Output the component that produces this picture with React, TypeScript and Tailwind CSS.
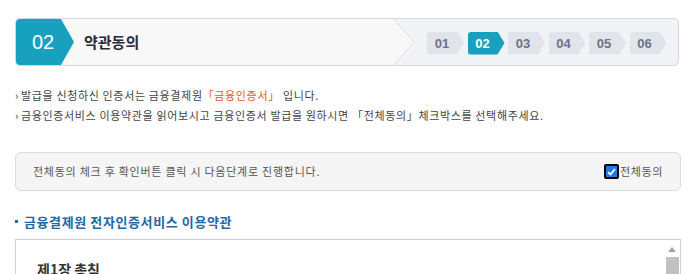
const KR = "font-['Noto_Sans_CJK_KR','Noto_Sans',sans-serif]";

const steps = ["01", "02", "03", "04", "05", "06"];

function StepBadge({ label, active }: { label: string; active: boolean }) {
  return (
    <div
      className={`flex h-[23px] w-[37px] items-center rounded-l-[3px] [clip-path:polygon(0_0,30px_0,37px_50%,30px_100%,0_100%)] ${
        active ? "bg-[#17a1be] text-white" : "bg-[#e2e4ec] text-[#6c7187]"
      }`}
    >
      <span className="w-[30px] text-center font-['Liberation_Sans',Arial,sans-serif] text-[13px] font-bold leading-none">
        {label}
      </span>
    </div>
  );
}

export default function App() {
  return (
    <div className={`h-[274px] w-[693px] overflow-hidden bg-white ${KR}`}>
      {/* 단계 헤더 */}
      <div className="ml-[15px] mt-[18px] flex h-[48px] w-[664px] overflow-hidden rounded-[5px] border border-[#d3d7de] bg-[#f2f3f6]">
        <div className="flex w-[377px] items-center bg-[#f8f8f9]">
          <div className="flex h-full w-[58px] items-center bg-[#17a1be] pl-[16px] [clip-path:polygon(0_0,45px_0,58px_50%,45px_100%,0_100%)]">
            <span className="font-['Liberation_Sans',Arial,sans-serif] text-[20px] leading-none text-white">
              02
            </span>
          </div>
          <span className="ml-[10px] text-[15px] font-bold text-[#2a2a38]">약관동의</span>
        </div>
        <svg width="22" height="46" viewBox="0 0 22 46" className="shrink-0">
          <polygon points="0,0 1,0 21,23 1,46 0,46" fill="#f8f8f9" />
          <polyline points="1,0 21,23 1,46" fill="none" stroke="#dcdfe5" strokeWidth="1" />
        </svg>
        <div className="flex items-center gap-[3.5px] pl-[12px] pt-[2px]">
          {steps.map((s) => (
            <StepBadge key={s} label={s} active={s === "02"} />
          ))}
        </div>
      </div>

      {/* 안내 문구 */}
      <div className="ml-[15px] mt-[19px] text-[11px] leading-[20px] tracking-[0.65px] text-[#444]">
        <p>
          <span className="mr-[2px] text-[#333]">›</span>
          발급을 신청하신 인증서는 금융결제원
          <span className="text-[#e8561e]">「금융인증서」</span> 입니다.
        </p>
        <p>
          <span className="mr-[2px] text-[#333]">›</span>
          금융인증서비스 이용약관을 읽어보시고 금융인증서 발급을 원하시면 「전체동의」체크박스를 선택해주세요.
        </p>
      </div>

      {/* 전체동의 */}
      <div className="ml-[15px] mt-[27px] flex h-[39px] w-[666px] items-center justify-between rounded-[6px] border border-[#dadada] bg-[#f5f5f5] pl-[17px] pr-[17px]">
        <p className="text-[11px] tracking-[0.75px] text-[#555]">
          전체동의 체크 후 확인버튼 클릭 시 다음단계로 진행합니다.
        </p>
        <label className="flex items-center gap-[1px] text-[11px] tracking-[0.6px] text-[#555]">
          <span className="flex h-[15px] w-[15px] items-center justify-center rounded-[2px] border-[2px] border-black bg-[#1a78f2]">
            <svg width="9" height="8" viewBox="0 0 9 8">
              <polyline points="1,4.2 3.5,6.5 8,1" fill="none" stroke="white" strokeWidth="1.8" />
            </svg>
          </span>
          전체동의
        </label>
      </div>

      {/* 약관 */}
      <div className="ml-[15px] mt-[21px] flex items-center gap-[6px]">
        <span className="h-[3px] w-[3px] bg-[#2068a8]" />
        <h2 className="text-[13px] font-bold tracking-[0.6px] text-[#2068a8]">
          금융결제원 전자인증서비스 이용약관
        </h2>
      </div>
      <div className="ml-[15px] mt-[7px] flex h-[200px] w-[666px] border border-[#cdd1d6] bg-white">
        <div className="flex-1 pl-[21px] pt-[19px]">
          <p className="text-[14px] font-bold text-[#333]">제1장 총칙</p>
        </div>
        <div className="flex w-[16px] flex-col items-center pt-[7px]">
          <svg width="8" height="5" viewBox="0 0 8 5">
            <polygon points="4,0 8,5 0,5" fill="#a3a3a3" />
          </svg>
          <div className="mt-[5px] h-[60px] w-[13px] bg-[#c1c1c1]" />
        </div>
      </div>
    </div>
  );
}
